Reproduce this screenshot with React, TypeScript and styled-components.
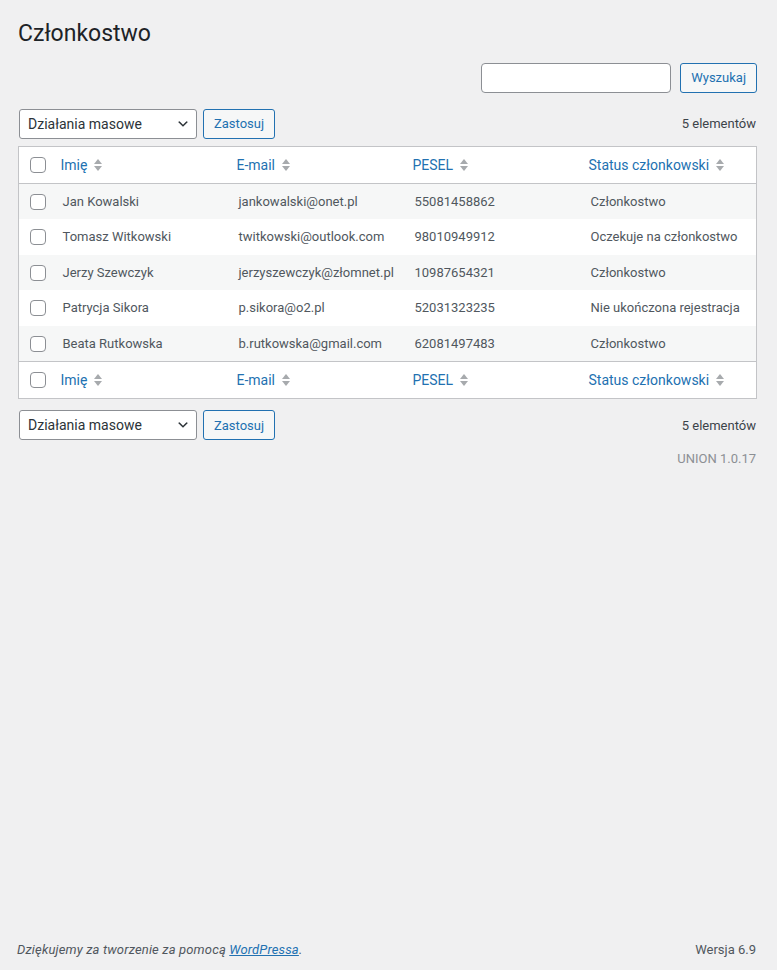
import React from 'react';
import styled, { createGlobalStyle } from 'styled-components';

type Member = {
  name: string;
  email: string;
  pesel: string;
  status: string;
};

const members: Member[] = [
  { name: 'Jan Kowalski', email: 'jankowalski@onet.pl', pesel: '55081458862', status: 'Członkostwo' },
  { name: 'Tomasz Witkowski', email: 'twitkowski@outlook.com', pesel: '98010949912', status: 'Oczekuje na członkostwo' },
  { name: 'Jerzy Szewczyk', email: 'jerzyszewczyk@złomnet.pl', pesel: '10987654321', status: 'Członkostwo' },
  { name: 'Patrycja Sikora', email: 'p.sikora@o2.pl', pesel: '52031323235', status: 'Nie ukończona rejestracja' },
  { name: 'Beata Rutkowska', email: 'b.rutkowska@gmail.com', pesel: '62081497483', status: 'Członkostwo' },
];

const columns = ['Imię', 'E-mail', 'PESEL', 'Status członkowski'];

const GlobalStyle = createGlobalStyle`
  html, body {
    margin: 0;
    padding: 0;
    background: #f0f0f1;
  }
  body {
    font-family: Roboto, "Noto Sans", sans-serif;
    font-size: 13px;
    color: #3c434a;
  }
`;

const Page = styled.div`
  min-height: 100vh;
  display: flex;
  flex-direction: column;
`;

const Wrap = styled.div`
  flex: 1;
  padding: 19px 20px 0 18px;
`;

const Title = styled.h1`
  margin: 0;
  font-size: 23px;
  font-weight: 400;
  line-height: 1.3;
  color: #1d2327;
`;

const SearchBox = styled.div`
  display: flex;
  justify-content: flex-end;
  gap: 9px;
  margin-top: 14px;
`;

const SearchInput = styled.input`
  box-sizing: border-box;
  width: 190px;
  height: 30px;
  border: 1px solid #8c8f94;
  border-radius: 4px;
  background: #fff;
  padding: 0 8px;
  font: inherit;
`;

const Button = styled.button`
  box-sizing: border-box;
  height: 30px;
  padding: 0 10px;
  border: 1px solid #2271b1;
  border-radius: 3px;
  background: #f6f7f7;
  color: #2271b1;
  font-family: Roboto, sans-serif;
  font-size: 13px;
  cursor: pointer;
`;

const TableNav = styled.div<{ $top?: boolean }>`
  display: flex;
  align-items: center;
  justify-content: space-between;
  margin: ${(p) => (p.$top ? '16px 0 7px' : '11px 0 0')};
`;

const Actions = styled.div`
  display: flex;
  align-items: center;
  gap: 6px;
  margin-left: 1px;
`;

const Select = styled.div`
  box-sizing: border-box;
  width: 178px;
  height: 30px;
  display: flex;
  align-items: center;
  justify-content: space-between;
  padding: 0 6px 0 8px;
  border: 1px solid #8c8f94;
  border-radius: 3px;
  background: #fff;
  color: #2c3338;
  font-size: 14px;
`;

const Count = styled.span`
  font-size: 13px;
  color: #3c434a;
  margin-right: 1px;
`;

const Table = styled.table`
  width: 100%;
  border-collapse: collapse;
  table-layout: fixed;
  background: #fff;
  border: 1px solid #c3c4c7;
`;

const HeadRow = styled.tr<{ $foot?: boolean }>`
  border-${(p) => (p.$foot ? 'top' : 'bottom')}: 1px solid #c3c4c7;
`;

const CheckCell = styled.td`
  width: 34px;
  box-sizing: border-box;
  padding: 0 0 0 11px;
  vertical-align: middle;
  line-height: 0;
`;

const Th = styled.th`
  text-align: left;
  font-weight: 400;
  padding: 0;
`;

const SortLink = styled.a`
  display: inline-flex;
  align-items: center;
  gap: 7px;
  padding: 8px;
  font-size: 14px;
  line-height: 20px;
  color: #2271b1;
  text-decoration: none;
  cursor: pointer;
`;

const Row = styled.tr<{ $alt: boolean }>`
  background: ${(p) => (p.$alt ? '#f6f7f7' : '#fff')};
`;

const Td = styled.td`
  padding: 8px 10px;
  font-size: 13px;
  line-height: 1.5;
  color: #50575e;
  white-space: nowrap;
  overflow: hidden;
`;

const Checkbox = styled.input.attrs({ type: 'checkbox' })`
  appearance: none;
  width: 16px;
  height: 16px;
  margin: 0;
  border: 1px solid #8c8f94;
  border-radius: 4px;
  background: #fff;
  box-sizing: border-box;
`;

const Version = styled.div`
  text-align: right;
  margin: 9px 1px 0 0;
  font-size: 13px;
  line-height: 1.5;
  color: #8c8f94;
`;

const Footer = styled.footer`
  display: flex;
  justify-content: space-between;
  align-items: center;
  padding: 0 21px 11px 17px;
  font-size: 13px;
  line-height: 18px;
  color: #50575e;
`;

const Thanks = styled.span`
  font-style: italic;
  letter-spacing: 0.15px;

  a {
    color: #2271b1;
    text-decoration: underline;
  }
`;

const SortIcon: React.FC = () => (
  <svg width="8" height="14" viewBox="0 0 8 14" aria-hidden="true">
    <path d="M4 1 L8 6 L0 6 Z" fill="#a7aaad" />
    <path d="M0 8 L8 8 L4 13 Z" fill="#a7aaad" />
  </svg>
);

const Chevron: React.FC = () => (
  <svg width="14" height="14" viewBox="0 0 20 20" aria-hidden="true">
    <path d="M5 6l5 5 5-5 2 1-7 7-7-7 2-1z" fill="#2c3338" />
  </svg>
);

const HeaderRow: React.FC<{ foot?: boolean }> = ({ foot }) => (
  <HeadRow $foot={foot}>
    <CheckCell>
      <Checkbox />
    </CheckCell>
    {columns.map((c) => (
      <Th key={c}>
        <SortLink>
          <span>{c}</span>
          <SortIcon />
        </SortLink>
      </Th>
    ))}
  </HeadRow>
);

const BulkBar: React.FC<{ top?: boolean }> = ({ top }) => (
  <TableNav $top={top}>
    <Actions>
      <Select>
        <span>Działania masowe</span>
        <Chevron />
      </Select>
      <Button>Zastosuj</Button>
    </Actions>
    <Count>5 elementów</Count>
  </TableNav>
);

const App: React.FC = () => (
  <Page>
    <GlobalStyle />
    <Wrap>
      <Title>Członkostwo</Title>
      <SearchBox>
        <SearchInput type="search" />
        <Button>Wyszukaj</Button>
      </SearchBox>
      <BulkBar top />
      <Table>
        <thead>
          <HeaderRow />
        </thead>
        <tbody>
          {members.map((m, i) => (
            <Row key={m.pesel} $alt={i % 2 === 0}>
              <CheckCell>
                <Checkbox />
              </CheckCell>
              <Td>{m.name}</Td>
              <Td>{m.email}</Td>
              <Td>{m.pesel}</Td>
              <Td>{m.status}</Td>
            </Row>
          ))}
        </tbody>
        <tfoot>
          <HeaderRow foot />
        </tfoot>
      </Table>
      <BulkBar />
      <Version>UNION 1.0.17</Version>
    </Wrap>
    <Footer>
      <Thanks>
        Dziękujemy za tworzenie za pomocą <a>WordPressa</a>.
      </Thanks>
      <span>Wersja 6.9</span>
    </Footer>
  </Page>
);

export default App;
